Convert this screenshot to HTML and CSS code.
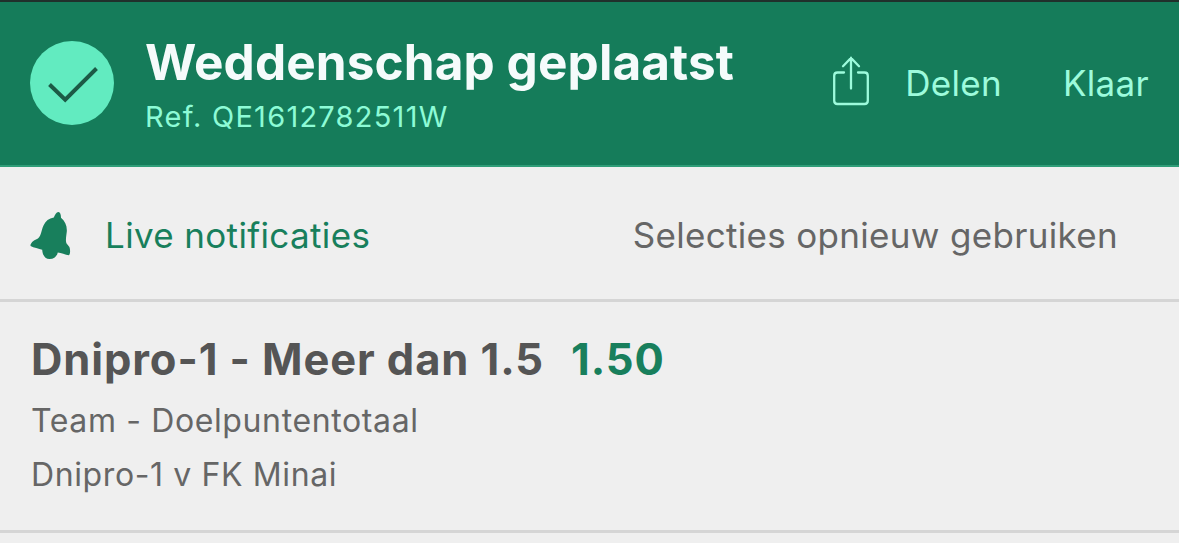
FILE: index.html
```html
<!DOCTYPE html>
<html lang="nl">
<head>
  <meta charset="UTF-8" />
  <meta name="viewport" content="width=device-width, initial-scale=1.0"/>
  <title>Weddenschap geplaatst</title>
  <link rel="stylesheet" href="styles.css">
</head>
<body>
  <header class="receipt-header">
    <svg class="check-icon" viewBox="0 0 84 84">
      <circle cx="42" cy="42" r="42" fill="#62ebc0"/>
      <path d="M19.5 43.5 L35.2 58.6 L66.5 27.5" fill="none" stroke="#1c5a46" stroke-width="4"/>
    </svg>
    <div class="receipt-title">
      <h1>Weddenschap geplaatst</h1>
      <p class="reference">Ref. QE1612782511W</p>
    </div>
    <div class="share">
      <svg class="share-icon" viewBox="0 0 36 50">
        <path d="M11 16.5 H4.5 Q1.2 16.5 1.2 19.8 V44.7 Q1.2 48 4.5 48 H31.5 Q34.8 48 34.8 44.7 V19.8 Q34.8 16.5 31.5 16.5 H25"/>
        <path d="M18 32.5 V2 M10 10.2 L18 2 L26 10.2"/>
      </svg>
      <span class="share-label">Delen</span>
    </div>
    <span class="done">Klaar</span>
  </header>

  <div class="actions">
    <svg class="bell-icon" viewBox="0 0 42 50">
      <path d="M28.5 1 C30.2 1.2 31 3.5 31 6.8 C35 10 37.2 15 36.8 20.5 C36.2 26 35 31 37.2 33.2 L39.4 36 C40.5 39 40.3 43.8 38.8 44.2 C35.5 43.8 31 41.8 27.8 41.5 C26.8 45.5 24 48 19.5 48 C15 48 12.5 44 12.2 38.8 C9 37.5 3.5 36.8 0.6 35 C-0.2 33 3.5 29.2 6.5 28.3 C11 27 11 20 13.5 14.5 C15.5 10 19 7.2 23.8 6.5 C25 3.5 26.5 0.8 28.5 1 Z" fill="#187f5c"/>
    </svg>
    <span class="live-label">Live notificaties</span>
    <span class="reuse-label">Selecties opnieuw gebruiken</span>
  </div>

  <section class="selection">
    <h2><span class="pick">Dnipro-1 - Meer dan 1.5</span><span class="odds">1.50</span></h2>
    <p class="market">Team - Doelpuntentotaal</p>
    <p class="event">Dnipro-1 v FK Minai</p>
  </section>
</body>
</html>
```

FILE: styles.css
```css
* {
  box-sizing: border-box;
}

body {
  margin: 0;
  font-family: Inter, "Liberation Sans", sans-serif;
  background: #efefef;
  color: #666;
}

h1, h2, p {
  margin: 0;
  white-space: nowrap;
}

.receipt-header {
  display: flex;
  align-items: center;
  height: 167px;
  padding: 0 30px;
  background: #157c5a;
  border-top: 2px solid #20302b;
  border-bottom: 2px solid #2f9d78;
}

.check-icon {
  width: 84px;
  height: 84px;
  margin-bottom: 1px;
  flex-shrink: 0;
}

.receipt-title {
  margin-left: 31px;
  padding-top: 8px;
}

h1 {
  font-size: 49.5px;
  line-height: 58px;
  font-weight: 700;
  letter-spacing: 0.1px;
  color: #f5fbfb;
}

.reference {
  font-size: 29px;
  line-height: 52px;
  letter-spacing: 1.25px;
  color: #8dfbd6;
}

.share {
  display: flex;
  align-items: center;
  gap: 36px;
  margin-left: auto;
}

.share-icon {
  width: 36px;
  height: 50px;
  margin-bottom: 5px;
  fill: none;
  stroke: #9dfbdc;
  stroke-width: 2.3;
  stroke-linecap: round;
}

.share-label,
.done {
  margin-bottom: 1px;
  font-size: 35px;
  letter-spacing: 0.3px;
  color: #9dfbdc;
}

.done {
  margin-left: 61px;
}

.actions {
  display: flex;
  align-items: center;
  height: 135px;
  padding: 3px 61px 0 30px;
  border-bottom: 3px solid #d5d5d5;
  font-size: 35px;
}

.bell-icon {
  width: 42px;
  height: 50px;
  margin-top: 3px;
}

.live-label {
  margin-left: 33px;
  letter-spacing: 0.35px;
  color: #187f5c;
}

.reuse-label {
  margin-left: auto;
  letter-spacing: 0.32px;
}

.selection {
  height: 231px;
  padding: 22px 31px 0;
  border-bottom: 3px solid #d5d5d5;
  font-size: 32px;
  line-height: 54px;
}

h2 {
  font-size: 43.5px;
  line-height: 70px;
  font-weight: 700;
  letter-spacing: 0.9px;
  color: #555;
}

.odds {
  margin-left: 27px;
  color: #187f5c;
}

.market,
.event {
  letter-spacing: 0.62px;
}
```
